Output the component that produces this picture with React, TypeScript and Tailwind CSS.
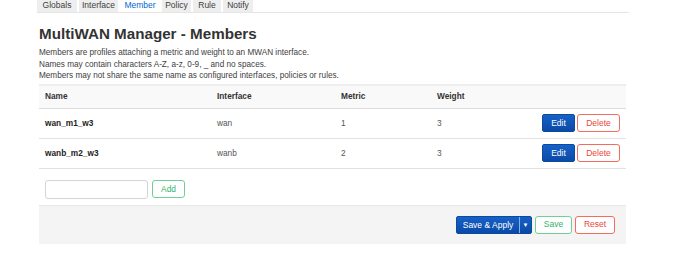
import React from 'react'

const tabs = [
  { label: 'Globals', w: 'w-[40px]' },
  { label: 'Interface', w: 'w-[39px]' },
  { label: 'Member', w: 'w-[40px]' },
  { label: 'Policy', w: 'w-[29px]' },
  { label: 'Rule', w: 'w-[28px]' },
  { label: 'Notify', w: 'w-[30px]' },
]

const members = [
  { name: 'wan_m1_w3', iface: 'wan', metric: '1', weight: '3' },
  { name: 'wanb_m2_w3', iface: 'wanb', metric: '2', weight: '3' },
]

export default function App() {
  return (
    <div className="w-[690px] h-[256px] bg-white text-[#404040] overflow-hidden" style={{ fontFamily: '"Liberation Sans", Arial, sans-serif' }}>
      <div className="ml-[37px] w-[592px]">
        {/* Tabs */}
        <div className="flex h-[13px] border-b border-[#e5e5e5] gap-[2px]">
          {tabs.map((t) => (
            <div
              key={t.label}
              className={
                t.w + ' h-[12px] text-[8.5px] leading-[10px] text-center ' +
                (t.label === 'Member' ? 'bg-white text-[#0069d6]' : 'bg-[#eeeeee] text-[#404040]')
              }
            >
              {t.label}
            </div>
          ))}
        </div>
      </div>

      <div className="ml-[39px] w-[587px]">
        <h2 className="mt-[12px] text-[15.2px] leading-[18px] font-bold text-[#333]">MultiWAN Manager - Members</h2>
        <div className="mt-[4px] text-[8.2px] leading-[11.5px] text-[#404040]">
          <p>Members are profiles attaching a metric and weight to an MWAN interface.</p>
          <p>Names may contain characters A-Z, a-z, 0-9, _ and no spaces.</p>
          <p>Members may not share the same name as configured interfaces, policies or rules.</p>
        </div>

        {/* Table */}
        <div className="mt-[2px] border-t-2 border-[#eeeeee] text-[8.3px]">
          <div className="grid grid-cols-[172px_124px_96px_1fr] h-[23px] items-center bg-[#f9f9f9] border-b border-[#dddddd] font-bold text-[#333] pl-[6px]">
            <div>Name</div>
            <div>Interface</div>
            <div>Metric</div>
            <div>Weight</div>
          </div>
          {members.map((m) => (
            <div key={m.name} className="grid grid-cols-[172px_124px_96px_1fr] h-[30px] items-center border-b border-[#e2e2e2] pl-[6px]">
              <div className="font-bold text-[#222]">{m.name}</div>
              <div className="text-[#555]">{m.iface}</div>
              <div className="text-[#555]">{m.metric}</div>
              <div className="flex items-center justify-between pr-[6px]">
                <span className="text-[#555]">{m.weight}</span>
                <div className="flex gap-[2px]">
                  <button className="w-[33px] h-[18px] rounded-[2px] bg-gradient-to-b from-[#1761c7] to-[#0a4aa7] border border-[#0c4aa0] text-white text-[8.5px]">Edit</button>
                  <button className="w-[43px] h-[18px] rounded-[3px] bg-white border border-[#f46c5d] text-[#e8473a] text-[8.5px]">Delete</button>
                </div>
              </div>
            </div>
          ))}
        </div>

        <div className="flex items-center gap-[4px] mt-[11px] ml-[6px]">
          <input className="w-[103px] h-[19px] border border-[#d4d4d4] rounded-[3px] bg-white" />
          <button className="w-[33px] h-[18px] rounded-[3px] border border-[#6fcf97] bg-white text-[#2fb46a] text-[8.3px]">Add</button>
        </div>

        {/* Footer */}
        <div className="mt-[6px] h-[39px] bg-[#f4f4f4] border-t border-[#e8e8e8] flex items-center justify-end gap-[3px] pr-[11px]">
          <div className="flex h-[18px] rounded-[2px] bg-gradient-to-b from-[#1761c7] to-[#0a4aa7] border border-[#0c4aa0] text-white text-[8.5px]">
            <span className="w-[62px] text-center leading-[16px]">Save &amp; Apply</span>
            <span className="w-[12px] border-l border-[#8fb0e0] text-[6px] leading-[16px] text-center">▼</span>
          </div>
          <button className="w-[37px] h-[18px] rounded-[3px] border border-[#6fcf97] bg-white text-[#2fb46a] text-[8.5px]">Save</button>
          <button className="w-[40px] h-[18px] rounded-[3px] border border-[#f46c5d] bg-white text-[#e8473a] text-[8.5px]">Reset</button>
        </div>
      </div>
    </div>
  )
}
